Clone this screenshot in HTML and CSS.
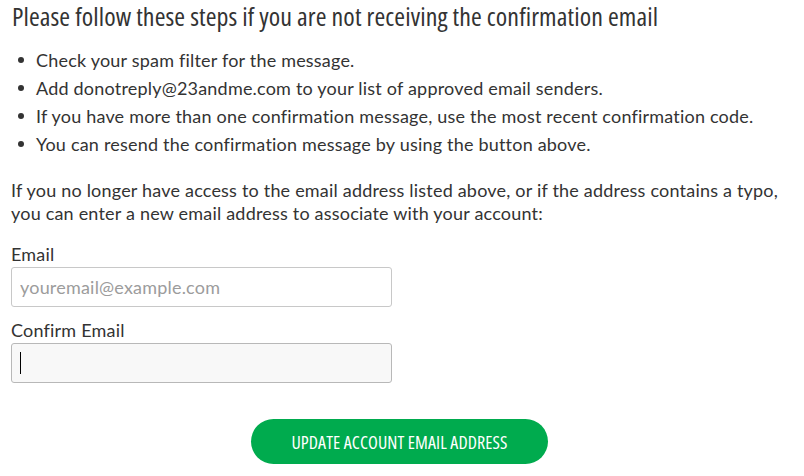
FILE: index.html
```
<!DOCTYPE html>
<html>
<head>
<meta charset="utf-8">
<link rel="stylesheet" href="styles.css">
</head>
<body>
<div class="page">
  <h1 class="title">Please follow these steps if you are not receiving the confirmation email</h1>
  <ul class="steps">
    <li>Check your spam filter for the message.</li>
    <li>Add donotreply@23andme.com to your list of approved email senders.</li>
    <li>If you have more than one confirmation message, use the most recent confirmation code.</li>
    <li>You can resend the confirmation message by using the button above.</li>
  </ul>
  <p class="note">If you no longer have access to the email address listed above, or if the address contains a typo, you can enter a new email address to associate with your account:</p>
  <form class="form">
    <label class="label" for="email">Email</label>
    <input class="field" id="email" type="text" placeholder="youremail@example.com">
    <label class="label label-second" for="confirm">Confirm Email</label>
    <div class="field field-focus"><span class="caret"></span></div>
    <div class="actions">
      <button class="btn" type="button">UPDATE ACCOUNT EMAIL ADDRESS</button>
    </div>
  </form>
</div>
</body>
</html>
```
FILE: styles.css
```
html, body {
  margin: 0;
  padding: 0;
  background: #ffffff;
}
.page {
  padding: 0 11px;
  font-family: Lato, "Open Sans", sans-serif;
  color: #333333;
  letter-spacing: 0.2px;
}
.title {
  margin: 0 0 0 1px;
  font-family: "Open Sans", sans-serif;
  font-stretch: 75%;
  font-weight: normal;
  font-size: 26px;
  line-height: 32px;
  letter-spacing: 0.1px;
  color: #333333;
}
.steps {
  list-style: none;
  margin: 14px 0 0 0;
  padding: 0;
}
.steps li {
  display: flex;
  align-items: center;
  font-size: 18px;
  line-height: 28px;
}
.steps li::before {
  content: "";
  flex: none;
  width: 6px;
  height: 6px;
  border-radius: 50%;
  background: #333333;
  margin: 0 12px 0 7px;
}
.note {
  margin: 21px 0 0 0;
  font-size: 18px;
  line-height: 23px;
}
.form {
  display: flex;
  flex-direction: column;
  margin-top: 18px;
}
.label {
  font-size: 18px;
  line-height: 23px;
}
.label-second {
  margin-top: 12px;
}
.field {
  box-sizing: border-box;
  width: 381px;
  height: 40px;
  margin-top: 1px;
  border: 1px solid #c8c8c8;
  border-radius: 3px;
  padding: 0 8px;
  font-family: Lato, "Open Sans", sans-serif;
  font-size: 18px;
  letter-spacing: 0.2px;
  color: #333333;
  background: #ffffff;
  outline: none;
}
.field::placeholder {
  color: #9c9c9c;
}
.field-focus {
  display: flex;
  align-items: center;
  background: #f8f8f8;
  border-color: #b8b8b8;
}
.caret {
  width: 1px;
  height: 22px;
  background: #000000;
}
.actions {
  display: flex;
  justify-content: center;
  margin-top: 36px;
  padding-right: 5px;
}
.btn {
  width: 297px;
  height: 45px;
  border: none;
  border-radius: 23px;
  background: #00ab4e;
  color: #ffffff;
  font-family: "Open Sans", sans-serif;
  font-stretch: 75%;
  font-size: 18px;
  letter-spacing: 0.1px;
  cursor: pointer;
}
```
